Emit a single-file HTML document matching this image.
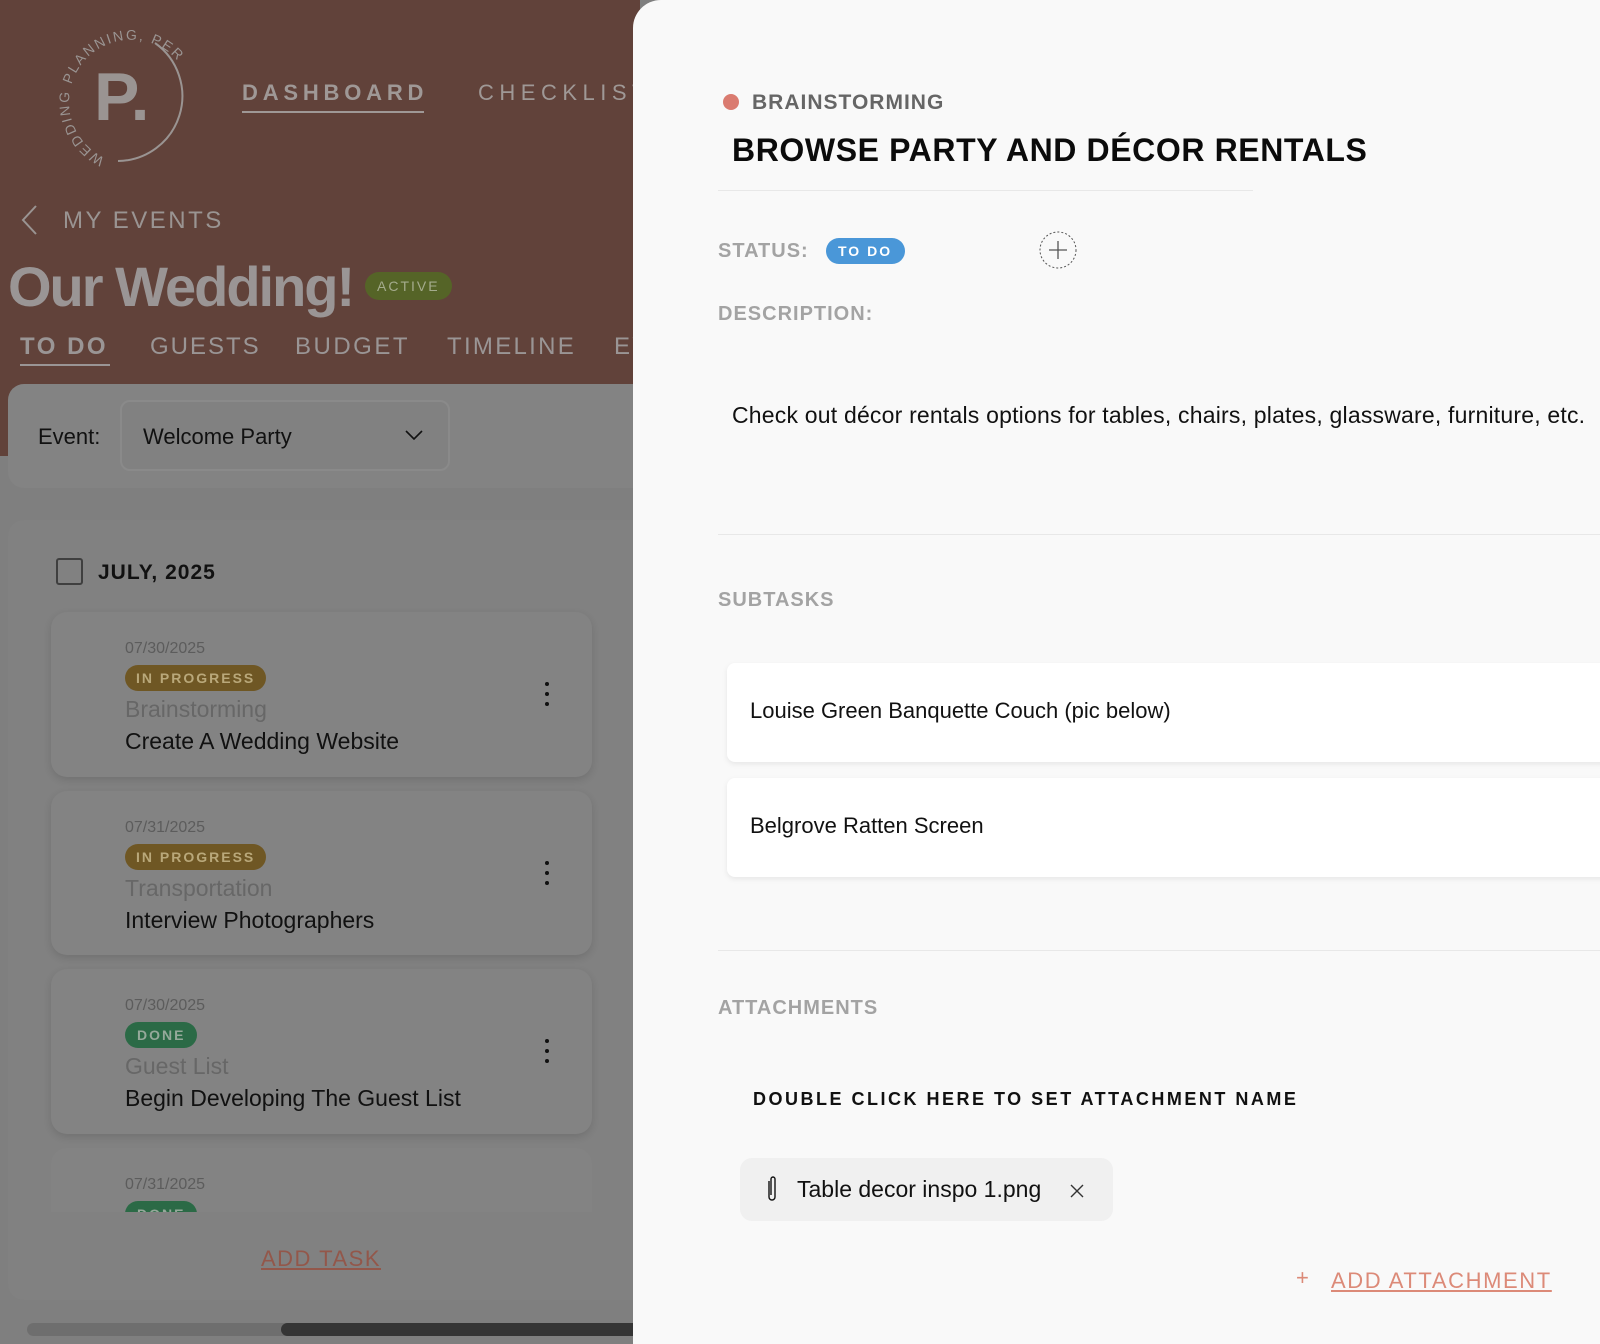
<!DOCTYPE html>
<html><head><meta charset="utf-8"><style>
*{box-sizing:border-box;margin:0;padding:0}
body{width:1600px;height:1344px;overflow:hidden;position:relative;background:#7f7f7f;font-family:"Liberation Sans",sans-serif}
.a{position:absolute;white-space:nowrap}
.top{position:absolute;left:0;top:0;width:640px;height:456px;background:#61423a}
.card{position:absolute;left:51px;width:541px;background:#838383;border-radius:16px;box-shadow:0 3px 8px rgba(0,0,0,.12)}
.date{position:absolute;left:74px;font-size:16px;color:#5c5c5c}
.pill{position:absolute;left:74px;height:26px;border-radius:13px;font-size:14px;font-weight:bold;letter-spacing:2px;color:#b9a87a;padding:5px 11px;background:#6f5724}
.cat{position:absolute;left:74px;font-size:23px;color:#676767}
.tt{position:absolute;left:74px;font-size:23px;color:#111}
.dots{position:absolute;left:494px;width:4px}
.dots i{display:block;width:4px;height:4px;border-radius:2px;background:#111;margin-bottom:6px}
.right{position:absolute;left:633px;top:0;width:967px;height:1344px;background:#f9f9f9;border-top-left-radius:28px}
.lab{position:absolute;font-size:20px;font-weight:bold;color:#a3a3a3;letter-spacing:1px}
.sub{position:absolute;left:94px;width:900px;height:99px;background:#fff;border-radius:8px;box-shadow:0 2px 6px rgba(0,0,0,.08);font-size:22px;color:#111;padding:35px 0 0 23px}
.hr{position:absolute;height:1px;background:#e8e8e8}
</style></head><body>
<div class="top"></div>
<svg class="a" style="left:40px;top:18px" width="150" height="150" viewBox="0 0 150 150">
<path d="M115 25 A65 65 0 0 1 78 143" fill="none" stroke="#9a9492" stroke-width="2"/>
<text x="54" y="102" font-family="Liberation Sans" font-weight="bold" font-size="68" fill="#9a9492">P.</text>
<defs><path id="c" d="M65 140 A62 62 0 1 1 135 40"/></defs>
<text font-family="Liberation Sans" font-size="14" fill="#9a9492" letter-spacing="2"><textPath href="#c">WEDDING PLANNING, PERFECTED</textPath></text>
</svg>
<div class="a" style="left:242px;top:80px;font-size:22px;font-weight:bold;letter-spacing:4.8px;color:#9f9896">DASHBOARD</div>
<div class="a" style="left:242px;top:111px;width:182px;height:2px;background:#9f9896"></div>
<div class="a" style="left:478px;top:80px;font-size:22px;letter-spacing:5.5px;color:#9f9896">CHECKLIST</div>
<svg class="a" style="left:18px;top:204px" width="24" height="32"><path d="M18 2 L5 16 L18 30" fill="none" stroke="#9a9492" stroke-width="2"/></svg>
<div class="a" style="left:63px;top:207px;font-size:24px;letter-spacing:2.5px;color:#9a9492">MY EVENTS</div>
<div class="a" style="left:8px;top:254px;font-size:56px;font-weight:bold;letter-spacing:-2px;color:#9a9595">Our Wedding!</div>
<div class="a" style="left:365px;top:272px;width:87px;height:28px;border-radius:14px;background:#556427;color:#a4ab8c;font-size:14px;letter-spacing:2px;padding:6px 0 0 12px">ACTIVE</div>
<div class="a" style="left:20px;top:333px;font-size:24px;font-weight:bold;letter-spacing:2.5px;color:#9a9595">TO DO</div>
<div class="a" style="left:20px;top:364px;width:90px;height:2px;background:#9a9595"></div>
<div class="a" style="left:150px;top:333px;font-size:24px;letter-spacing:2px;color:#9a9595">GUESTS</div>
<div class="a" style="left:295px;top:333px;font-size:24px;letter-spacing:2.5px;color:#9a9595">BUDGET</div>
<div class="a" style="left:447px;top:333px;font-size:24px;letter-spacing:2.3px;color:#9a9595">TIMELINE</div>
<div class="a" style="left:614px;top:333px;font-size:24px;letter-spacing:2.5px;color:#9a9595">EV</div>
<div class="a" style="left:8px;top:384px;width:640px;height:104px;background:#838383;border-radius:16px"></div>
<div class="a" style="left:38px;top:424px;font-size:22px;color:#111">Event:</div>
<div class="a" style="left:120px;top:400px;width:330px;height:71px;border:2px solid #8a8a8a;border-radius:10px;background:#818181"></div>
<div class="a" style="left:143px;top:424px;font-size:22px;color:#111">Welcome Party</div>
<svg class="a" style="left:404px;top:428px" width="20" height="14"><path d="M2 3 L10 11 L18 3" fill="none" stroke="#111" stroke-width="1.6"/></svg>
<div class="a" style="left:8px;top:520px;width:640px;height:780px;background:#818181;border-radius:16px"></div>
<div class="a" style="left:56px;top:558px;width:27px;height:27px;border:2px solid #3f3f3f;border-radius:3px"></div>
<div class="a" style="left:98px;top:561px;font-size:21px;font-weight:bold;color:#111;letter-spacing:1px">JULY, 2025</div>
<div class="card" style="top:612px;height:165px"><div class="date" style="top:28px">07/30/2025</div><div class="pill" style="top:53px">IN PROGRESS</div><div class="cat" style="top:84px">Brainstorming</div><div class="tt" style="top:116px">Create A Wedding Website</div><div class="dots" style="top:70px"><i></i><i></i><i></i></div></div>
<div class="card" style="top:791px;height:164px"><div class="date" style="top:28px">07/31/2025</div><div class="pill" style="top:53px">IN PROGRESS</div><div class="cat" style="top:84px">Transportation</div><div class="tt" style="top:116px">Interview Photographers</div><div class="dots" style="top:70px"><i></i><i></i><i></i></div></div>
<div class="card" style="top:969px;height:165px"><div class="date" style="top:28px">07/30/2025</div><div class="pill" style="top:53px;background:#2b6a46;color:#95a99a;padding:5px 12px">DONE</div><div class="cat" style="top:84px">Guest List</div><div class="tt" style="top:116px">Begin Developing The Guest List</div><div class="dots" style="top:70px"><i></i><i></i><i></i></div></div>
<div class="card" style="top:1148px;height:64px;overflow:hidden;border-radius:16px 16px 0 0;box-shadow:none"><div class="date" style="top:28px">07/31/2025</div><div class="pill" style="top:53px;background:#2b6a46;color:#95a99a;padding:5px 12px">DONE</div></div>
<div class="a" style="left:261px;top:1246px;font-size:22px;letter-spacing:1.5px;color:#93574a;text-decoration:underline">ADD TASK</div>
<div class="a" style="left:27px;top:1323px;width:620px;height:13px;border-radius:7px;background:#6e6e6e"></div>
<div class="a" style="left:281px;top:1323px;width:370px;height:13px;border-radius:7px;background:#353535"></div>
<div class="right">
<div class="a" style="left:90px;top:94px;width:16px;height:16px;border-radius:8px;background:#da7b70"></div>
<div class="a" style="left:119px;top:91px;font-size:21px;font-weight:bold;color:#666;letter-spacing:1px">BRAINSTORMING</div>
<div class="a" style="left:99px;top:132px;font-size:32px;font-weight:bold;color:#0b0b0b;letter-spacing:.6px">BROWSE PARTY AND DÉCOR RENTALS</div>
<div class="hr" style="left:85px;top:190px;width:535px"></div>
<div class="lab" style="left:85px;top:240px">STATUS:</div>
<div class="a" style="left:193px;top:238px;width:79px;height:26px;border-radius:13px;background:#4a97d8;color:#fff;font-size:14px;font-weight:bold;letter-spacing:2px;padding:5px 0 0 12px">TO DO</div>
<svg class="a" style="left:406px;top:231px" width="38" height="38"><circle cx="19" cy="19" r="18" fill="none" stroke="#555" stroke-width="1" stroke-dasharray="2 2"/><path d="M19 10 V28 M10 19 H28" stroke="#555" stroke-width="1.3"/></svg>
<div class="lab" style="left:85px;top:303px">DESCRIPTION:</div>
<div class="a" style="left:99px;top:402px;font-size:23px;letter-spacing:.2px;color:#111">Check out décor rentals options for tables, chairs, plates, glassware, furniture, etc.</div>
<div class="hr" style="left:85px;top:534px;width:900px"></div>
<div class="lab" style="left:85px;top:589px">SUBTASKS</div>
<div class="sub" style="top:663px">Louise Green Banquette Couch (pic below)</div>
<div class="sub" style="top:778px">Belgrove Ratten Screen</div>
<div class="hr" style="left:85px;top:950px;width:900px"></div>
<div class="lab" style="left:85px;top:997px">ATTACHMENTS</div>
<div class="a" style="left:120px;top:1089px;font-size:18px;font-weight:bold;color:#111;letter-spacing:2.5px">DOUBLE CLICK HERE TO SET ATTACHMENT NAME</div>
<div class="a" style="left:107px;top:1158px;width:373px;height:63px;border-radius:12px;background:#f0f0f0"></div>
<svg class="a" style="left:132px;top:1175px" width="14" height="28"><path d="M4 6 V22 a3 3 0 0 0 6 0 V4 a2 2 0 0 0 -4 0 V20" fill="none" stroke="#111" stroke-width="1.4"/></svg>
<div class="a" style="left:164px;top:1176px;font-size:23px;color:#111">Table decor inspo 1.png</div>
<svg class="a" style="left:436px;top:1183px" width="16" height="16"><path d="M2 2 L14 14 M14 2 L2 14" stroke="#333" stroke-width="1.4"/></svg>
<div class="a" style="left:663px;top:1265px;font-size:22px;color:#dc8a78">+</div>
<div class="a" style="left:698px;top:1268px;font-size:22px;letter-spacing:1.6px;color:#dc8a78;text-decoration:underline">ADD ATTACHMENT</div>
</div>
</body></html>
